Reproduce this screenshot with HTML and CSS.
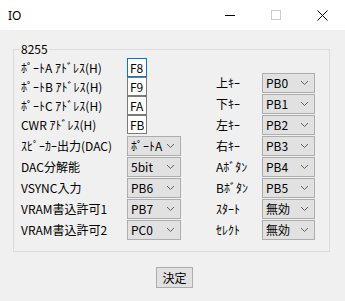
FILE: index.html
```html
<!DOCTYPE html>
<html lang="ja">
<head>
  <meta charset="UTF-8">
  <title>IO</title>
  <link rel="stylesheet" href="styles.css">
</head>
<body>

  <div class="titlebar">
    <span class="title">IO</span>
    <div class="caption-buttons">
      <span class="cap-btn">
        <svg width="10" height="10" viewBox="0 0 10 10"><line x1="0" y1="5.5" x2="10" y2="5.5" stroke="#000" stroke-width="1"/></svg>
      </span>
      <span class="cap-btn">
        <svg width="10" height="10" viewBox="0 0 10 10"><rect x="0.5" y="0.5" width="9" height="9" fill="none" stroke="#cccccc" stroke-width="1"/></svg>
      </span>
      <span class="cap-btn">
        <svg width="11" height="11" viewBox="0 0 11 11"><path d="M0.5 0.5 L10.5 10.5 M10.5 0.5 L0.5 10.5" stroke="#000" stroke-width="1"/></svg>
      </span>
    </div>
  </div>

  <div class="client">
    <div class="group">
      <span class="legend">8255</span>

      <div class="col-left">
        <div class="row-text"><span class="label">ﾎﾟｰﾄA ｱﾄﾞﾚｽ(H)</span><input class="addr focus" type="text" value="F8"></div>
        <div class="row-text"><span class="label">ﾎﾟｰﾄB ｱﾄﾞﾚｽ(H)</span><input class="addr" type="text" value="F9"></div>
        <div class="row-text"><span class="label">ﾎﾟｰﾄC ｱﾄﾞﾚｽ(H)</span><input class="addr" type="text" value="FA"></div>
        <div class="row-text"><span class="label">CWR ｱﾄﾞﾚｽ(H)</span><input class="addr" type="text" value="FB"></div>

        <div class="combos-left">
          <div class="row-combo"><span class="label">ｽﾋﾟｰｶｰ出力(DAC)</span><div class="combo"><span>ﾎﾟｰﾄA</span><svg class="chev" width="7" height="4" viewBox="0 0 7 4"><path d="M0 0 L3.5 3.5 L7 0" fill="none" stroke="#606060"/></svg></div></div>
          <div class="row-combo"><span class="label">DAC分解能</span><div class="combo"><span>5bit</span><svg class="chev" width="7" height="4" viewBox="0 0 7 4"><path d="M0 0 L3.5 3.5 L7 0" fill="none" stroke="#606060"/></svg></div></div>
          <div class="row-combo"><span class="label">VSYNC入力</span><div class="combo"><span>PB6</span><svg class="chev" width="7" height="4" viewBox="0 0 7 4"><path d="M0 0 L3.5 3.5 L7 0" fill="none" stroke="#606060"/></svg></div></div>
          <div class="row-combo"><span class="label">VRAM書込許可1</span><div class="combo"><span>PB7</span><svg class="chev" width="7" height="4" viewBox="0 0 7 4"><path d="M0 0 L3.5 3.5 L7 0" fill="none" stroke="#606060"/></svg></div></div>
          <div class="row-combo"><span class="label">VRAM書込許可2</span><div class="combo"><span>PC0</span><svg class="chev" width="7" height="4" viewBox="0 0 7 4"><path d="M0 0 L3.5 3.5 L7 0" fill="none" stroke="#606060"/></svg></div></div>
        </div>
      </div>

      <div class="col-right">
        <div class="row-combo"><span class="label-r">上ｷｰ</span><div class="combo"><span>PB0</span><svg class="chev" width="7" height="4" viewBox="0 0 7 4"><path d="M0 0 L3.5 3.5 L7 0" fill="none" stroke="#606060"/></svg></div></div>
        <div class="row-combo"><span class="label-r">下ｷｰ</span><div class="combo"><span>PB1</span><svg class="chev" width="7" height="4" viewBox="0 0 7 4"><path d="M0 0 L3.5 3.5 L7 0" fill="none" stroke="#606060"/></svg></div></div>
        <div class="row-combo"><span class="label-r">左ｷｰ</span><div class="combo"><span>PB2</span><svg class="chev" width="7" height="4" viewBox="0 0 7 4"><path d="M0 0 L3.5 3.5 L7 0" fill="none" stroke="#606060"/></svg></div></div>
        <div class="row-combo"><span class="label-r">右ｷｰ</span><div class="combo"><span>PB3</span><svg class="chev" width="7" height="4" viewBox="0 0 7 4"><path d="M0 0 L3.5 3.5 L7 0" fill="none" stroke="#606060"/></svg></div></div>
        <div class="row-combo"><span class="label-r">Aﾎﾞﾀﾝ</span><div class="combo"><span>PB4</span><svg class="chev" width="7" height="4" viewBox="0 0 7 4"><path d="M0 0 L3.5 3.5 L7 0" fill="none" stroke="#606060"/></svg></div></div>
        <div class="row-combo"><span class="label-r">Bﾎﾞﾀﾝ</span><div class="combo"><span>PB5</span><svg class="chev" width="7" height="4" viewBox="0 0 7 4"><path d="M0 0 L3.5 3.5 L7 0" fill="none" stroke="#606060"/></svg></div></div>
        <div class="row-combo"><span class="label-r">ｽﾀｰﾄ</span><div class="combo"><span>無効</span><svg class="chev" width="7" height="4" viewBox="0 0 7 4"><path d="M0 0 L3.5 3.5 L7 0" fill="none" stroke="#606060"/></svg></div></div>
        <div class="row-combo"><span class="label-r">ｾﾚｸﾄ</span><div class="combo"><span>無効</span><svg class="chev" width="7" height="4" viewBox="0 0 7 4"><path d="M0 0 L3.5 3.5 L7 0" fill="none" stroke="#606060"/></svg></div></div>
      </div>
    </div>

    <div class="footer">
      <button class="ok">決定</button>
    </div>
  </div>

</body>
</html>
```

FILE: styles.css
```css
html, body {
  margin: 0;
  padding: 0;
}

body {
  width: 345px;
  height: 301px;
  overflow: hidden;
  font-family: "Noto Sans CJK JP", "Noto Sans", sans-serif;
  font-size: 12px;
  color: #000;
  background-color: #f0f0f0;
}

/* title bar */
.titlebar {
  height: 30px;
  background-color: #fff;
  display: flex;
  align-items: center;
}

.title {
  font-family: "Noto Sans", sans-serif;
  font-size: 12px;
  margin-left: 8px;
  flex: 1;
}

.caption-buttons {
  display: flex;
  height: 30px;
  margin-right: 0;
}

.cap-btn {
  width: 46px;
  height: 30px;
  display: flex;
  align-items: center;
  justify-content: center;
}

/* client area */
.client {
  padding-top: 19px;
}

.group {
  position: relative;
  box-sizing: border-box;
  margin-left: 13px;
  width: 317px;
  height: 203px;
  border: 1px solid #dcdcdc;
  display: flex;
  padding-left: 7px;
}

.legend {
  position: absolute;
  top: -8px;
  left: 6px;
  padding: 0 1px;
  line-height: 14px;
  background-color: #f0f0f0;
}

.col-left {
  padding-top: 8px;
}

.row-text {
  display: flex;
  align-items: center;
  height: 19px;
}

.label {
  width: 106px;
  line-height: 14px;
  white-space: nowrap;
}

.addr {
  box-sizing: border-box;
  width: 20px;
  height: 19px;
  margin: 0;
  padding: 0 2px;
  border: 1px solid #7a7a7a;
  background-color: #fff;
  font-family: "Noto Sans CJK JP", sans-serif;
  font-size: 12px;
  color: #000;
  outline: none;
}

.addr.focus {
  border-color: #0078d7;
}

.combos-left {
  padding-top: 2px;
}

.row-combo {
  display: flex;
  align-items: center;
  height: 20px;
  margin-bottom: 1px;
}

.col-right {
  padding-top: 23px;
  margin-left: 35px;
}

.label-r {
  width: 46px;
  line-height: 14px;
  white-space: nowrap;
}

.combo {
  box-sizing: border-box;
  width: 54px;
  height: 20px;
  border: 1px solid #adadad;
  background-color: #e1e1e1;
  display: flex;
  align-items: center;
  justify-content: space-between;
  padding: 0 6px 0 3px;
  line-height: 14px;
}

.col-right .combo {
  width: 53px;
}

.chev {
  display: block;
}

/* footer */
.footer {
  padding-top: 15px;
}

.ok {
  box-sizing: border-box;
  margin-left: 156px;
  width: 37px;
  height: 21px;
  padding: 0;
  border: 1px solid #adadad;
  background-color: #e1e1e1;
  font-family: "Noto Sans CJK JP", sans-serif;
  font-size: 12px;
  color: #000;
}
```
